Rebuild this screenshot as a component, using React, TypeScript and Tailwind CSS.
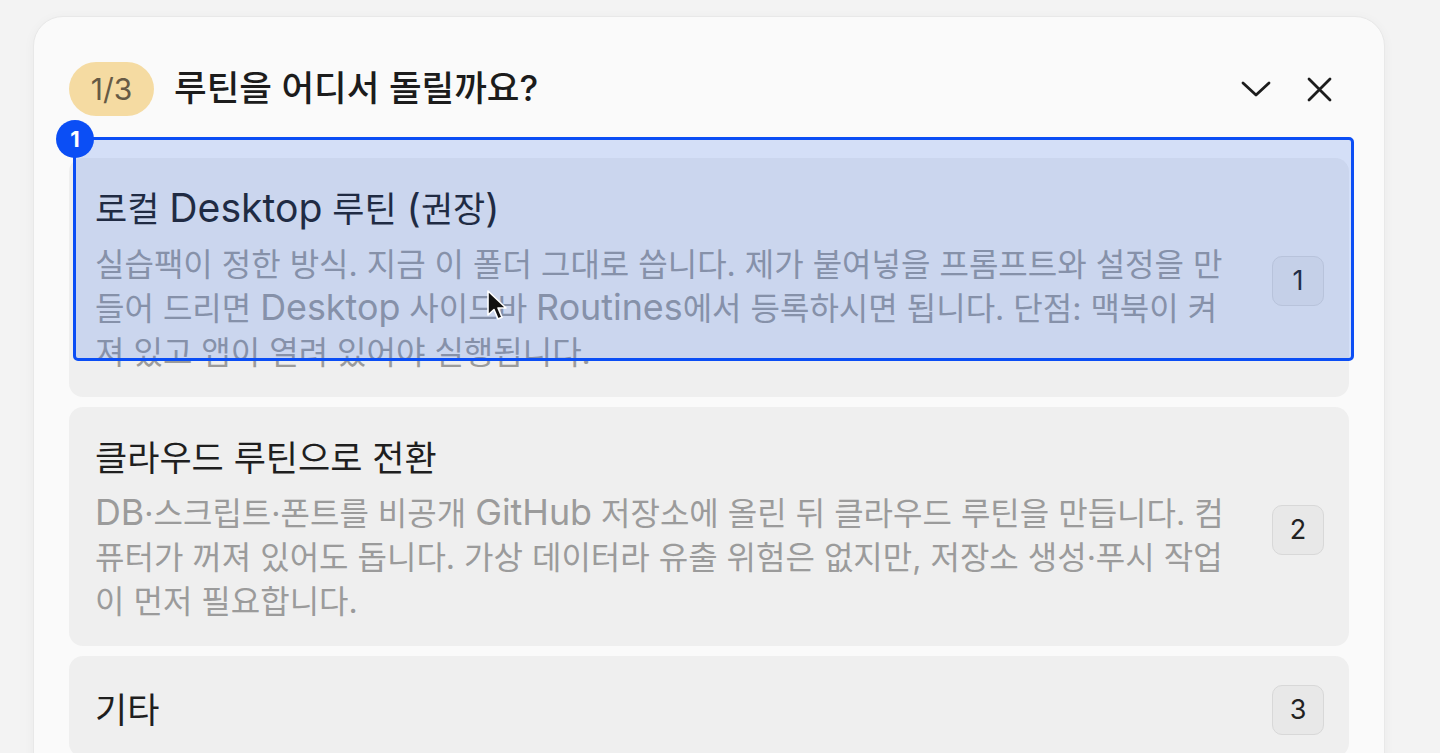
interface Option {
  key: string
  title: string
  desc?: string
}

const options: Option[] = [
  {
    key: '1',
    title: '로컬 Desktop 루틴 (권장)',
    desc: '실습팩이 정한 방식. 지금 이 폴더 그대로 씁니다. 제가 붙여넣을 프롬프트와 설정을 만들어 드리면 Desktop 사이드바 Routines에서 등록하시면 됩니다. 단점: 맥북이 켜져 있고 앱이 열려 있어야 실행됩니다.',
  },
  {
    key: '2',
    title: '클라우드 루틴으로 전환',
    desc: 'DB·스크립트·폰트를 비공개 GitHub 저장소에 올린 뒤 클라우드 루틴을 만듭니다. 컴퓨터가 꺼져 있어도 돕니다. 가상 데이터라 유출 위험은 없지만, 저장소 생성·푸시 작업이 먼저 필요합니다.',
  },
  { key: '3', title: '기타' },
]

// Latin runs render a bit larger than the Hangul, like the system font in the shot
function Mixed({ text }: { text: string }) {
  const parts = text.split(/([A-Za-z()]+)/)
  return (
    <>
      {parts.map((p, i) =>
        /^[A-Za-z()]+$/.test(p) ? (
          <span key={i} className="text-[1.12em] leading-[0]">
            {p}
          </span>
        ) : (
          p
        )
      )}
    </>
  )
}

function OptionCard({ option }: { option: Option }) {
  return (
    <div className="flex items-center gap-[35px] rounded-[14px] bg-[#efefef] pl-[26px] pr-[25px] pt-[29px] pb-[22px]">
      <div className="flex-1 min-w-0">
        <div className="text-[35px] leading-[44px] text-[#1f1f1f]">
          <Mixed text={option.title} />
        </div>
        {option.desc && (
          <p className="mt-[12px] text-[32px] leading-[44px] text-[#9b9b9b]">
            <Mixed text={option.desc} />
          </p>
        )}
      </div>
      <div className="flex h-[50px] w-[52px] shrink-0 items-center justify-center rounded-[10px] border border-[#d8d8d8] bg-[#e8e8e8] text-[27px] text-[#222]">
        {option.key}
      </div>
    </div>
  )
}

export default function App() {
  return (
    <div className="relative h-[753px] overflow-hidden bg-[#f3f3f3] pl-[33px] pr-[55px] pt-[16px] font-['Inter','Noto_Sans_CJK_KR',sans-serif]">
      <div className="h-[900px] rounded-[30px] border border-[#e8e8e8] bg-[#fafafa] px-[35px] pt-[45px] shadow-[0_2px_12px_rgba(0,0,0,0.04)]">
        {/* Header */}
        <div className="flex h-[54px] items-center">
          <span className="flex h-[54px] w-[85px] items-center justify-center rounded-full bg-[#f5dba2] text-[30px] text-[#665a45]">
            1/3
          </span>
          <h1 className="ml-[20px] text-[35.5px] font-medium text-[#1c1c1c]">루틴을 어디서 돌릴까요?</h1>
          <div className="ml-auto mr-[17px] flex items-center gap-[36px] text-[#1c1c1c]">
            <svg width="30" height="16" viewBox="0 0 30 16" fill="none" stroke="currentColor" strokeWidth="2.8" strokeLinecap="round" strokeLinejoin="round">
              <path d="M2 2 L15 14 L28 2" />
            </svg>
            <svg width="25" height="25" viewBox="0 0 25 25" fill="none" stroke="currentColor" strokeWidth="2.8" strokeLinecap="round">
              <path d="M2 2 L23 23 M23 2 L2 23" />
            </svg>
          </div>
        </div>

        {/* Options */}
        <div className="mt-[42px] flex flex-col gap-[10px]">
          {options.map((o) => (
            <OptionCard key={o.key} option={o} />
          ))}
        </div>
      </div>

      {/* Highlight annotation */}
      <div className="absolute left-[73px] top-[137px] h-[224px] w-[1281px] rounded-[5px] border-[3px] border-[#0b4ef5] bg-[rgba(37,99,235,0.18)]" />
      <div className="absolute left-[56px] top-[120px] flex h-[38px] w-[38px] items-center justify-center rounded-full bg-[#0b4ef5] text-[22px] font-bold text-white">
        1
      </div>

      {/* Cursor */}
      <svg className="absolute left-[486px] top-[289px]" width="22" height="32" viewBox="0 0 22 32">
        <path d="M2 2 L2 26 L8 20.5 L12 30 L16 28.3 L12 19 L20 19 Z" fill="#111" stroke="#fff" strokeWidth="1.6" strokeLinejoin="round" />
      </svg>
    </div>
  )
}
